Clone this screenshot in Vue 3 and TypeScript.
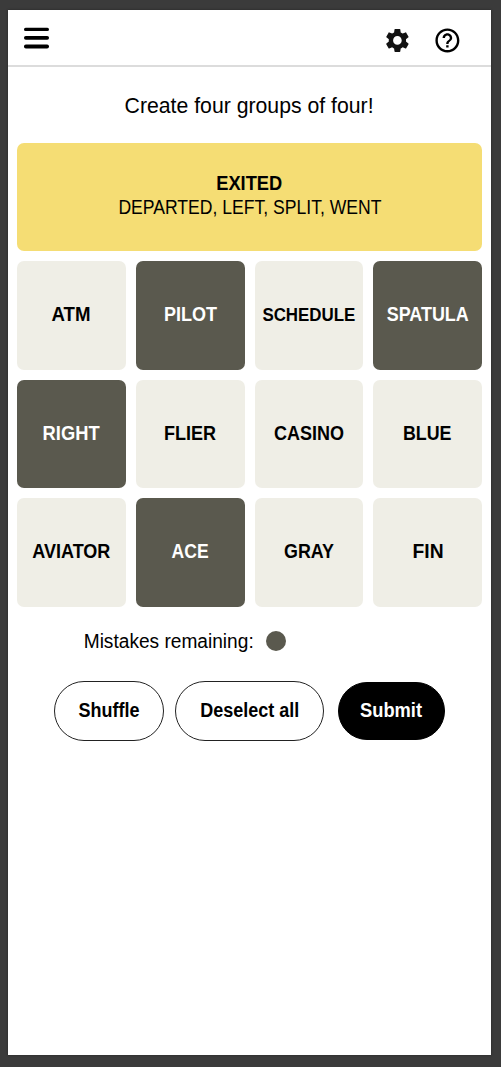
<script setup lang="ts">
import { ref, computed } from 'vue'

interface Tile {
  word: string
  width: number
  small?: boolean
}

const tiles: Tile[] = [
  { word: 'ATM', width: 39 },
  { word: 'PILOT', width: 53 },
  { word: 'SCHEDULE', width: 93, small: true },
  { word: 'SPATULA', width: 82 },
  { word: 'RIGHT', width: 57 },
  { word: 'FLIER', width: 52 },
  { word: 'CASINO', width: 70 },
  { word: 'BLUE', width: 48.5 },
  { word: 'AVIATOR', width: 78 },
  { word: 'ACE', width: 37 },
  { word: 'GRAY', width: 50 },
  { word: 'FIN', width: 31 },
]

const initial = ['PILOT', 'SPATULA', 'RIGHT', 'ACE']
const selected = ref<string[]>([...initial])
const mistakes = ref(1)
const canSubmit = computed(() => selected.value.length === 4)

function toggle(word: string) {
  if (selected.value.includes(word)) {
    selected.value = selected.value.filter((w) => w !== word)
  } else if (selected.value.length < 4) {
    selected.value = [...selected.value, word]
  }
}

// Condenses a label horizontally to the given width in pixels.
const vFit = {
  mounted(el: HTMLElement, binding: { value: number }) {
    const natural = el.getBoundingClientRect().width
    el.style.transform = `scaleX(${binding.value / natural})`
  },
}
</script>

<template>
  <div class="screen">
    <main class="page">
      <header class="bar">
        <svg class="menu" viewBox="0 0 25 22" aria-label="Menu">
          <rect x="0" y="0.8" width="25" height="3.2" rx="1.6" />
          <rect x="0" y="8.9" width="25" height="3.9" rx="1.8" />
          <rect x="0" y="17.4" width="25" height="4" rx="1.9" />
        </svg>
        <div class="tools">
          <svg class="icon gear" viewBox="0 0 24 24" aria-label="Settings">
            <path d="M19.14 12.94c.04-.3.06-.61.06-.94 0-.32-.02-.64-.07-.94l2.03-1.58c.18-.14.23-.41.12-.61l-1.92-3.32c-.12-.22-.37-.29-.59-.22l-2.39.96c-.5-.38-1.03-.7-1.62-.94l-.36-2.54c-.04-.24-.24-.41-.48-.41h-3.84c-.24 0-.43.17-.47.41l-.36 2.54c-.59.24-1.13.57-1.62.94l-2.39-.96c-.22-.08-.47 0-.59.22L2.74 8.87c-.12.21-.08.47.12.61l2.03 1.58c-.05.3-.09.63-.09.94s.02.64.07.94l-2.03 1.58c-.18.14-.23.41-.12.61l1.92 3.32c.12.22.37.29.59.22l2.39-.96c.5.38 1.03.7 1.62.94l.36 2.54c.05.24.24.41.48.41h3.84c.24 0 .44-.17.47-.41l.36-2.54c.59-.24 1.13-.56 1.62-.94l2.39.96c.22.08.47 0 .59-.22l1.92-3.32c.12-.22.07-.47-.12-.61l-2.01-1.58zM12 15.6c-1.98 0-3.6-1.62-3.6-3.6s1.62-3.6 3.6-3.6 3.6 1.62 3.6 3.6-1.62 3.6-3.6 3.6z" />
          </svg>
          <svg class="icon" viewBox="0 0 24 24" aria-label="Help">
            <path d="M11 18h2v-2h-2v2zm1-16C6.48 2 2 6.48 2 12s4.48 10 10 10 10-4.48 10-10S17.52 2 12 2zm0 18c-4.41 0-8-3.59-8-8s3.59-8 8-8 8 3.59 8 8-3.59 8-8 8zm0-14c-2.21 0-4 1.79-4 4h2c0-1.1.9-2 2-2s2 .9 2 2c0 2-3 1.75-3 5h2c0-2.25 3-2.5 3-5 0-2.21-1.79-4-4-4z" />
          </svg>
        </div>
      </header>

      <h1 class="prompt"><span v-fit="249" class="fit">Create four groups of four!</span></h1>

      <section class="board">
        <div class="solved">
          <b v-fit="66" class="fit">EXITED</b>
          <span v-fit="263" class="fit">DEPARTED, LEFT, SPLIT, WENT</span>
        </div>
        <button
          v-for="tile in tiles"
          :key="tile.word"
          class="tile"
          :class="{ on: selected.includes(tile.word), small: tile.small }"
          @click="toggle(tile.word)"
        >
          <span v-fit="tile.width" class="fit">{{ tile.word }}</span>
        </button>
      </section>

      <div class="mistakes">
        <span class="label"><span v-fit="170" class="fit">Mistakes remaining:</span></span>
        <i v-for="n in mistakes" :key="n" class="dot"></i>
      </div>

      <div class="actions">
        <button class="pill shuffle"><span v-fit="61" class="fit">Shuffle</span></button>
        <button class="pill deselect" @click="selected = []">
          <span v-fit="99" class="fit">Deselect all</span>
        </button>
        <button class="pill submit" :disabled="!canSubmit"><span v-fit="62" class="fit">Submit</span></button>
      </div>
    </main>
  </div>
</template>

<style>
body {
  margin: 0;
  background: #3b3b3b;
}
</style>

<style scoped>
.screen {
  box-sizing: border-box;
  width: 501px;
  height: 1067px;
  padding: 10px 10px 12px 8px;
  background: #3b3b3b;
  font-family: 'Liberation Sans', Arial, sans-serif;
  color: #000;
  overflow: hidden;
}
.page {
  height: 1045px;
  background: #fff;
  box-shadow: 0 0 2px #222;
}
.fit {
  display: inline-block;
  flex: none;
  white-space: nowrap;
}
.bar {
  box-sizing: border-box;
  height: 57px;
  display: flex;
  justify-content: space-between;
  padding: 0 29.5px 0 16px;
  border-bottom: 2px solid #dcdcdc;
}
.menu {
  width: 25px;
  height: 22px;
  margin-top: 17px;
}
.tools {
  display: flex;
  gap: 21px;
  padding-top: 15.8px;
}
.icon {
  width: 28.8px;
  height: 28.8px;
}
.gear {
  fill: #121212;
}
.prompt {
  margin: 0;
  height: 76.1px;
  box-sizing: border-box;
  padding-top: 26px;
  display: flex;
  justify-content: center;
  font-size: 21.5px;
  font-weight: 400;
  line-height: 26px;
}
.board {
  width: 465px;
  margin-left: 9px;
  display: grid;
  grid-template-columns: repeat(4, 1fr);
  grid-auto-rows: 108.4px;
  gap: 10px;
}
.solved {
  grid-column: 1 / -1;
  box-sizing: border-box;
  display: flex;
  flex-direction: column;
  align-items: center;
  justify-content: center;
  padding-bottom: 4.8px;
  border-radius: 7px;
  background: #f5dd74;
  font-size: 19.5px;
  line-height: 24px;
}
.tile {
  min-width: 0;
  display: flex;
  align-items: center;
  justify-content: center;
  padding: 0 0 2.4px;
  border: 0;
  border-radius: 7px;
  background: #efeee6;
  color: #000;
  font: 700 20px/24px 'Liberation Sans', Arial, sans-serif;
}
.tile.small {
  font-size: 18.5px;
  padding-bottom: 1.6px;
}
.tile.on {
  background: #5a594e;
  color: #fff;
}
.mistakes {
  display: flex;
  align-items: center;
  height: 24px;
  margin: 22.3px 0 0 75.5px;
}
.label {
  display: flex;
  justify-content: center;
  width: 171px;
  font-size: 19.5px;
  line-height: 24px;
}
.dot {
  width: 20px;
  height: 20px;
  margin-left: 11.5px;
  border-radius: 50%;
  background: #5a594e;
}
.actions {
  display: flex;
  align-items: center;
  height: 60px;
  margin: 27.8px 0 0 46px;
}
.pill {
  box-sizing: border-box;
  height: 60px;
  padding: 0 0 2px;
  display: flex;
  align-items: center;
  justify-content: center;
  border: 1px solid #222;
  border-radius: 30px;
  background: #fff;
  color: #000;
  font: 700 19.5px/24px 'Liberation Sans', Arial, sans-serif;
}
.shuffle {
  width: 109.5px;
}
.deselect {
  width: 149px;
  margin-left: 11.5px;
}
.submit {
  width: 107px;
  height: 58px;
  margin-left: 13.5px;
  border-color: #000;
  background: #000;
  color: #fff;
}
</style>
